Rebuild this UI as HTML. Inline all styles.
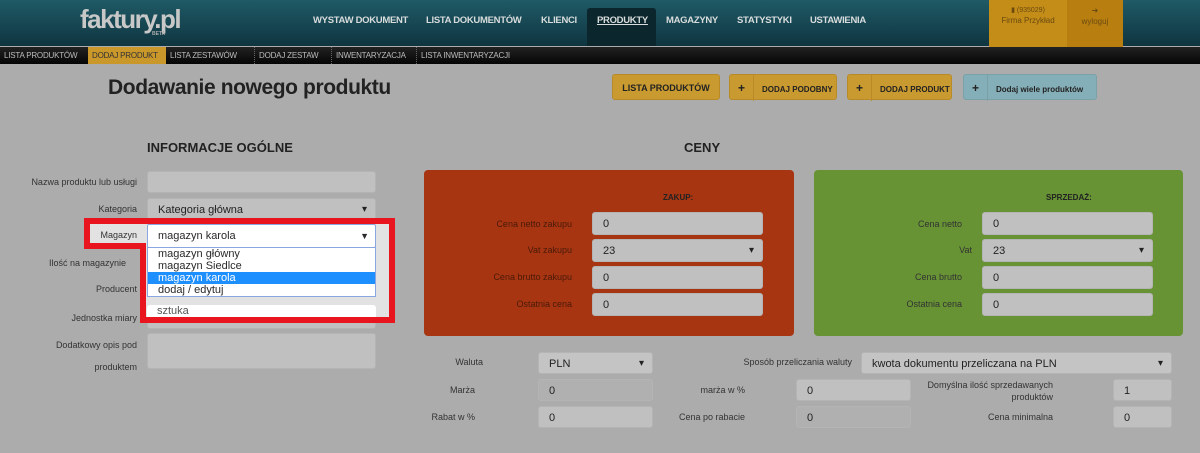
<!DOCTYPE html>
<html><head><meta charset="utf-8"><style>
*{margin:0;padding:0;box-sizing:border-box}
body{width:1200px;height:453px;overflow:hidden;background:#acacac;font-family:"Liberation Sans",sans-serif;position:relative;color:#2a2a2a}
.a{position:absolute}
.hdr{left:0;top:0;width:1200px;height:46px;background:linear-gradient(#1f5a66,#0f3540)}
.nav{top:15px;font-size:9.5px;font-weight:bold;color:#d8dcdc;letter-spacing:-0.3px}
.sub{left:0;top:47px;width:1200px;height:17px;background:linear-gradient(#222,#050505)}
.si{top:47px;height:17px;font-size:8px;color:#bbb;line-height:17px;padding:0 4px;letter-spacing:-0.2px;white-space:nowrap}
.sep{border-left:1px dotted #666}
.btn{height:26px;top:74px;background:#c99a30;border:1px solid #b88a28;border-radius:3px;font-size:9px;font-weight:bold;color:#222;line-height:26px;white-space:nowrap}
.lbl{font-size:9px;color:#333;text-align:right}
.in{background:#c0c0c0;border:1px solid #b4b4b4;border-radius:3px;font-size:11px;line-height:22px;padding-left:10px;color:#222}
.dd:after{content:"▾";position:absolute;right:8px;top:0;font-size:10px}
</style></head><body>
<div class="a hdr"></div>
<div class="a" style="left:80px;top:4px;font-size:26px;font-weight:bold;color:#c8c8c8;letter-spacing:-1.5px">faktury.pl</div>
<div class="a" style="left:152px;top:31px;font-size:5px;color:#aaa;font-weight:bold">BETA</div>
<div class="a nav" style="left:313px">WYSTAW DOKUMENT</div>
<div class="a nav" style="left:426px">LISTA DOKUMENTÓW</div>
<div class="a nav" style="left:541px">KLIENCI</div>
<div class="a" style="left:587px;top:8px;width:69px;height:38px;background:#0b262c;border-radius:3px 3px 0 0"></div>
<div class="a nav" style="left:597px;text-decoration:underline">PRODUKTY</div>
<div class="a nav" style="left:666px">MAGAZYNY</div>
<div class="a nav" style="left:737px">STATYSTYKI</div>
<div class="a nav" style="left:810px">USTAWIENIA</div>
<div class="a" style="left:989px;top:0;width:78px;height:47px;background:#c48d18;font-size:7px;color:#6a4a10;text-align:center;padding-top:6px">▮ (935029)<br><span style="font-size:8px;line-height:14px">Firma Przykład</span></div>
<div class="a" style="left:1067px;top:0;width:56px;height:47px;background:#b87f10;font-size:8px;color:#6a4a10;text-align:center;padding-top:6px">➜<br><span style="line-height:14px">wyloguj</span></div>
<div class="a sub"></div>
<div class="a si" style="left:0">LISTA PRODUKTÓW</div>
<div class="a si" style="left:88px;width:78px;background:#c9972a;color:#333">DODAJ PRODUKT</div>
<div class="a si" style="left:166px">LISTA ZESTAWÓW</div>
<div class="a si sep" style="left:254px">DODAJ ZESTAW</div>
<div class="a si sep" style="left:331px">INWENTARYZACJA</div>
<div class="a si sep" style="left:416px">LISTA INWENTARYZACJI</div>
<div class="a" style="left:108px;top:76px;font-size:21px;font-weight:bold;color:#222;letter-spacing:-0.4px">Dodawanie nowego produktu</div>
<div class="a btn" style="left:612px;width:108px;text-align:center">LISTA PRODUKTÓW</div>
<div class="a btn" style="left:729px;width:108px"><span style="display:inline-block;width:24px;text-align:center;border-right:1px solid #b88a28;font-size:12px">+</span><span style="padding-left:8px;font-size:8px">DODAJ PODOBNY</span></div>
<div class="a btn" style="left:847px;width:105px"><span style="display:inline-block;width:24px;text-align:center;border-right:1px solid #b88a28;font-size:12px">+</span><span style="padding-left:8px;font-size:8px">DODAJ PRODUKT</span></div>
<div class="a btn" style="left:963px;width:134px;background:#85afb8;border-color:#7aa0a8"><span style="display:inline-block;width:24px;text-align:center;border-right:1px solid #7aa0a8;font-size:12px">+</span><span style="padding-left:8px;font-size:8px">Dodaj wiele produktów</span></div>

<div class="a" style="left:147px;top:140px;font-size:13px;font-weight:bold;color:#222">INFORMACJE OGÓLNE</div>
<div class="a" style="left:684px;top:140px;font-size:13px;font-weight:bold;color:#222">CENY</div>

<div class="a lbl" style="left:0;width:137px;top:177px">Nazwa produktu lub usługi</div>
<div class="a in" style="left:147px;top:171px;width:229px;height:22px"></div>
<div class="a lbl" style="left:0;width:137px;top:204px">Kategoria</div>
<div class="a in dd" style="left:147px;top:198px;width:229px;height:22px">Kategoria główna</div>
<div class="a lbl" style="left:0;width:126px;top:258px">Ilość na magazynie</div>
<div class="a lbl" style="left:0;width:137px;top:284px">Producent</div>
<div class="a lbl" style="left:0;width:137px;top:313px">Jednostka miary</div>
<div class="a in" style="left:147px;top:307px;width:229px;height:22px"></div>
<div class="a lbl" style="left:0;width:137px;top:340px">Dodatkowy opis pod</div>
<div class="a lbl" style="left:0;width:137px;top:362px">produktem</div>
<div class="a in" style="left:147px;top:333px;width:229px;height:36px"></div>

<div class="a" style="left:90px;top:224px;width:56px;height:22px;background:#e2e2e2"></div>
<div class="a lbl" style="left:90px;width:47px;top:230px">Magazyn</div>
<div class="a" style="left:144px;top:224px;width:245px;height:95px;background:#e2e2e2"></div>
<div class="a" style="left:147px;top:305px;width:229px;height:14px;background:#fff;border-radius:3px 3px 0 0;font-size:11px;padding-left:10px;overflow:hidden;color:#555">sztuka</div>
<div class="a" style="left:147px;top:224px;width:229px;height:24px;background:#fff;border:1px solid #8aa6e0;border-radius:2px;font-size:11px;line-height:22px;padding-left:10px">magazyn karola<span style="position:absolute;right:6px;font-size:9px">▼</span></div>
<div class="a" style="left:147px;top:247px;width:229px;height:50px;background:#fff;border:1px solid #8aa6e0;font-size:11px;line-height:12px">
<div style="padding-left:10px">magazyn główny</div><div style="padding-left:10px">magazyn Siedlce</div><div style="padding-left:10px;background:#1e8fff;color:#fff">magazyn karola</div><div style="padding-left:10px">dodaj / edytuj</div></div>
<svg class="a" style="left:0;top:0" width="1200" height="453"><path d="M87 221 H392 V320 H143 V246 H87 Z" fill="none" stroke="#e8141e" stroke-width="6"/></svg>

<div class="a" style="left:424px;top:170px;width:370px;height:166px;background:#a73512;border-radius:4px"></div>
<div class="a" style="left:663px;top:193px;font-size:8px;font-weight:bold;color:#222">ZAKUP:</div>
<div class="a lbl" style="left:440px;width:132px;top:219px;color:#4a1a08">Cena netto zakupu</div>
<div class="a in" style="left:592px;top:212px;width:171px;height:23px">0</div>
<div class="a lbl" style="left:440px;width:132px;top:245px;color:#4a1a08">Vat zakupu</div>
<div class="a in dd" style="left:592px;top:239px;width:171px;height:23px">23</div>
<div class="a lbl" style="left:440px;width:132px;top:272px;color:#4a1a08">Cena brutto zakupu</div>
<div class="a in" style="left:592px;top:266px;width:171px;height:23px">0</div>
<div class="a lbl" style="left:440px;width:132px;top:299px;color:#4a1a08">Ostatnia cena</div>
<div class="a in" style="left:592px;top:293px;width:171px;height:23px">0</div>

<div class="a" style="left:814px;top:170px;width:369px;height:166px;background:#679334;border-radius:4px"></div>
<div class="a" style="left:1046px;top:193px;font-size:8px;font-weight:bold;color:#222">SPRZEDAŻ:</div>
<div class="a lbl" style="left:830px;width:132px;top:219px">Cena netto</div>
<div class="a in" style="left:982px;top:212px;width:171px;height:23px">0</div>
<div class="a lbl" style="left:830px;width:142px;top:245px">Vat</div>
<div class="a in dd" style="left:982px;top:239px;width:171px;height:23px">23</div>
<div class="a lbl" style="left:830px;width:132px;top:272px">Cena brutto</div>
<div class="a in" style="left:982px;top:266px;width:171px;height:23px">0</div>
<div class="a lbl" style="left:830px;width:132px;top:299px">Ostatnia cena</div>
<div class="a in" style="left:982px;top:293px;width:171px;height:23px">0</div>

<div class="a lbl" style="left:400px;width:83px;top:357px">Waluta</div>
<div class="a in dd" style="left:538px;top:352px;width:115px;height:22px;background:#c4c4c4">PLN</div>
<div class="a lbl" style="left:600px;width:252px;top:357px">Sposób przeliczania waluty</div>
<div class="a in dd" style="left:861px;top:352px;width:311px;height:22px;background:#c4c4c4">kwota dokumentu przeliczana na PLN</div>
<div class="a lbl" style="left:400px;width:75px;top:385px">Marża</div>
<div class="a in" style="left:538px;top:379px;width:115px;height:22px;background:#b0b0b0">0</div>
<div class="a lbl" style="left:600px;width:145px;top:385px">marża w %</div>
<div class="a in" style="left:796px;top:379px;width:115px;height:22px">0</div>
<div class="a lbl" style="left:900px;width:153px;top:379px;line-height:12px">Domyślna ilość sprzedawanych<br>produktów</div>
<div class="a in" style="left:1113px;top:379px;width:59px;height:22px">1</div>
<div class="a lbl" style="left:400px;width:75px;top:412px">Rabat w %</div>
<div class="a in" style="left:538px;top:406px;width:115px;height:22px">0</div>
<div class="a lbl" style="left:600px;width:145px;top:412px">Cena po rabacie</div>
<div class="a in" style="left:796px;top:406px;width:115px;height:22px;background:#b0b0b0">0</div>
<div class="a lbl" style="left:900px;width:153px;top:412px">Cena minimalna</div>
<div class="a in" style="left:1113px;top:406px;width:59px;height:22px">0</div>
</body></html>
